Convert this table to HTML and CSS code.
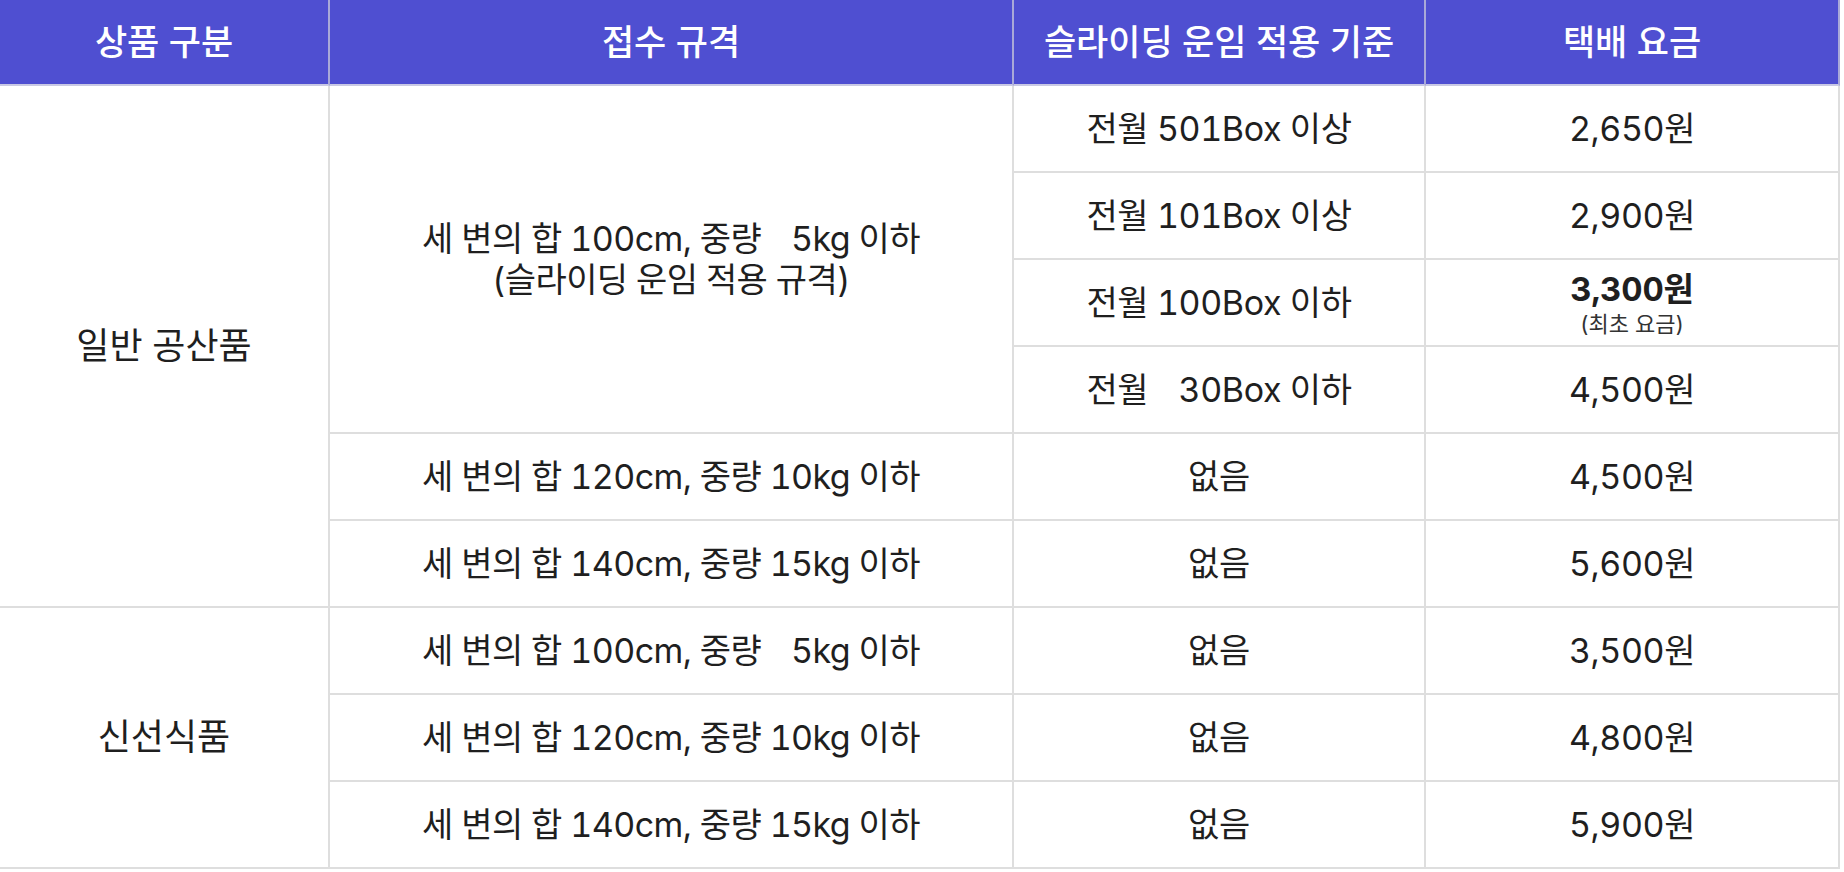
FILE: index.html
```html
<!DOCTYPE html>
<html lang="ko">
<head>
<meta charset="utf-8">
<title>택배 요금표</title>
<link rel="stylesheet" href="styles.css">
</head>
<body>
<div class="rate-table">
  <div class="cell head">상품 구분</div>
  <div class="cell head">접수 규격</div>
  <div class="cell head">슬라이딩 운임 적용 기준</div>
  <div class="cell head">택배 요금</div>

  <div class="cell cat cat-general">일반 공산품</div>
  <div class="cell spec spec-sliding"><span>세 변의 합 100cm, 중량&nbsp;&#8199;5kg 이하</span><span>(슬라이딩 운임 적용 규격)</span></div>
  <div class="cell">전월 501Box 이상</div>
  <div class="cell">2,650원</div>

  <div class="cell">전월 101Box 이상</div>
  <div class="cell">2,900원</div>

  <div class="cell">전월 100Box 이하</div>
  <div class="cell price-first"><strong class="price-strong">3,300원</strong><span class="price-note">(최초 요금)</span></div>

  <div class="cell">전월&nbsp;&#8199;30Box 이하</div>
  <div class="cell">4,500원</div>

  <div class="cell spec">세 변의 합 120cm, 중량 10kg 이하</div>
  <div class="cell">없음</div>
  <div class="cell">4,500원</div>

  <div class="cell spec">세 변의 합 140cm, 중량 15kg 이하</div>
  <div class="cell">없음</div>
  <div class="cell">5,600원</div>

  <div class="cell cat cat-fresh">신선식품</div>
  <div class="cell spec">세 변의 합 100cm, 중량&nbsp;&#8199;5kg 이하</div>
  <div class="cell">없음</div>
  <div class="cell">3,500원</div>

  <div class="cell spec">세 변의 합 120cm, 중량 10kg 이하</div>
  <div class="cell">없음</div>
  <div class="cell">4,800원</div>

  <div class="cell spec">세 변의 합 140cm, 중량 15kg 이하</div>
  <div class="cell">없음</div>
  <div class="cell">5,900원</div>
</div>
</body>
</html>
```

FILE: styles.css
```css
html, body {
  margin: 0;
  padding: 0;
  background: #ffffff;
}

body {
  font-family: Inter, "Noto Sans CJK KR", sans-serif;
  color: #1f1f1f;
  font-variant-numeric: tabular-nums;
}

.rate-table {
  display: grid;
  width: 1840px;
  grid-template-columns: 330px 684px 412px 414px;
  grid-template-rows: 86px repeat(9, 87px);
}

.cell {
  box-sizing: border-box;
  display: flex;
  flex-direction: column;
  align-items: center;
  justify-content: center;
  text-align: center;
  border-right: 2px solid #dedede;
  border-bottom: 2px solid #dedede;
  font-size: 34px;
  line-height: 41px;
  letter-spacing: -0.4px;
  white-space: nowrap;
}

.head {
  background: #4f4fd1;
  color: #ffffff;
  font-weight: 500;
  font-size: 35px;
  letter-spacing: 0;
  border-right-color: #a9a9d8;
  border-bottom-color: #c9c9e4;
}

.spec {
  letter-spacing: -0.6px;
}

.cat {
  font-size: 36px;
  letter-spacing: 0;
}

.cat-general {
  grid-row: span 6;
}

.cat-fresh {
  grid-row: span 3;
}

.spec-sliding {
  grid-row: span 4;
}

.price-strong {
  font-weight: 700;
  font-size: 33px;
  line-height: 40px;
  letter-spacing: -0.2px;
}

.price-note {
  margin-top: 2px;
  font-size: 22px;
  line-height: 26px;
  letter-spacing: 0;
  color: #333333;
}
```
